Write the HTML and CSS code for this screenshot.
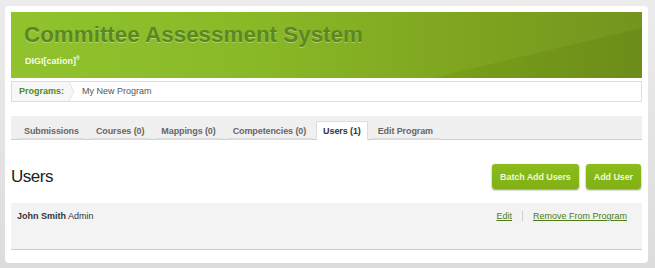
FILE: index.html
```html
<!DOCTYPE html>
<html lang="en">
<head>
    <meta charset="UTF-8">
    <title>Committee Assessment System - Users</title>
    <link rel="stylesheet" href="styles.css">
</head>
<body>
    <div class="page">
        <div class="header">
            <h1>Committee Assessment System</h1>
            <div class="brand">DIGI[cation]<sup>&reg;</sup></div>
        </div>

        <div class="breadcrumb">
            <span class="crumb-label">Programs:</span>
            <span class="crumb-current">My New Program</span>
        </div>

        <ul class="tabs">
            <li>Submissions</li>
            <li>Courses (0)</li>
            <li>Mappings (0)</li>
            <li>Competencies (0)</li>
            <li class="active">Users (1)</li>
            <li>Edit Program</li>
        </ul>

        <div class="section-head">
            <h2>Users</h2>
            <div class="actions">
                <button class="btn">Batch Add Users</button>
                <button class="btn">Add User</button>
            </div>
        </div>

        <div class="user-row">
            <div class="user-name"><strong>John Smith</strong> Admin</div>
            <div class="user-links">
                <a href="#">Edit</a>
                <span class="sep"></span>
                <a href="#">Remove From Program</a>
            </div>
        </div>
    </div>
</body>
</html>
```

FILE: styles.css
```css
html, body {
    height: 100%;
}
body {
    margin: 0;
    padding: 6px 7px 0 5px;
    font-family: "Liberation Sans", Arial, sans-serif;
    background: linear-gradient(to bottom, #ececec, #dcdcdc);
    box-sizing: border-box;
}
.page {
    background: white;
    border-radius: 4px;
    padding: 6px 6px 13px 6px;
}
.header {
    height: 66px;
    box-sizing: border-box;
    padding: 12px 0 0 13px;
    background:
        linear-gradient(166.6deg, rgba(255,255,255,0.02) 76.9%, rgba(0,0,0,0.04) 76.9%),
        linear-gradient(to right, #8ec22a 0%, #87b723 40%, #7ca31a 72%, #71921a 100%);
}
.header h1 {
    margin: 0;
    font-size: 22.4px;
    line-height: 22px;
    font-weight: bold;
    color: #5b8821;
    text-shadow: 0 1px 0 rgba(255,255,255,0.35);
}
.brand {
    margin: 7px 0 0 1px;
    font-size: 9px;
    line-height: 10px;
    font-weight: bold;
    color: #f4fbe6;
}
.brand sup {
    font-size: 5px;
}
.breadcrumb {
    margin-top: 3px;
    height: 21px;
    box-sizing: border-box;
    border: 1px solid #dddddd;
    display: flex;
    font-size: 9px;
    line-height: 19px;
}
.crumb-label {
    position: relative;
    background: #f7f7f7;
    color: #4d8a1c;
    font-weight: bold;
    padding: 0 6px 0 7px;
    margin-right: 12px;
}
.crumb-label::after {
    content: "";
    position: absolute;
    right: -6px;
    top: 3px;
    width: 12px;
    height: 12px;
    background: #f7f7f7;
    border-top: 1px solid #dddddd;
    border-right: 1px solid #dddddd;
    transform: scaleX(0.5) rotate(45deg);
}
.crumb-current {
    color: #555555;
}
.tabs {
    list-style: none;
    margin: 14px 0 0 0;
    padding: 0 0 0 6px;
    height: 23px;
    background: #f0f0f0;
    border-bottom: 1px solid #cccccc;
    display: flex;
    align-items: flex-end;
}
.tabs li {
    font-size: 9px;
    font-weight: bold;
    line-height: 18px;
    letter-spacing: -0.1px;
    color: #666666;
    padding: 0 6px;
    margin: 0 3px -1px 0;
    border: 1px solid transparent;
    border-bottom: none;
    box-shadow: inset 0 -2px 0 #dcdcdc;
}
.tabs li.active {
    background: white;
    color: #333333;
    border-color: #dddddd;
    box-shadow: none;
}
.section-head {
    margin-top: 24px;
    display: flex;
    align-items: center;
    justify-content: space-between;
}
.section-head h2 {
    margin: 0;
    font-size: 17px;
    line-height: 25px;
    font-weight: normal;
    letter-spacing: -0.5px;
    color: #222222;
}
.actions {
    display: flex;
    gap: 7px;
    margin-right: 1px;
}
.btn {
    height: 25px;
    padding: 0 8px;
    border: none;
    border-radius: 3px;
    background: linear-gradient(to bottom, #8bbd1c, #80b014);
    color: #eef8d6;
    font-family: "Liberation Sans", Arial, sans-serif;
    font-size: 9px;
    font-weight: bold;
    letter-spacing: -0.1px;
    box-shadow: 0 1px 2px rgba(0,0,0,0.45);
    cursor: pointer;
}
.user-row {
    margin-top: 14px;
    height: 47px;
    box-sizing: border-box;
    padding: 7px 15px 0 6px;
    background: #f3f3f3;
    border-bottom: 1px solid #cccccc;
    display: flex;
    justify-content: space-between;
    font-size: 9px;
    line-height: 12px;
    color: #333333;
}
.user-links {
    display: flex;
    align-items: center;
    height: 12px;
}
.user-links a {
    color: #4c7d16;
}
.sep {
    width: 1px;
    height: 10px;
    background: #cfcfcf;
    margin: 0 10px;
}
```
